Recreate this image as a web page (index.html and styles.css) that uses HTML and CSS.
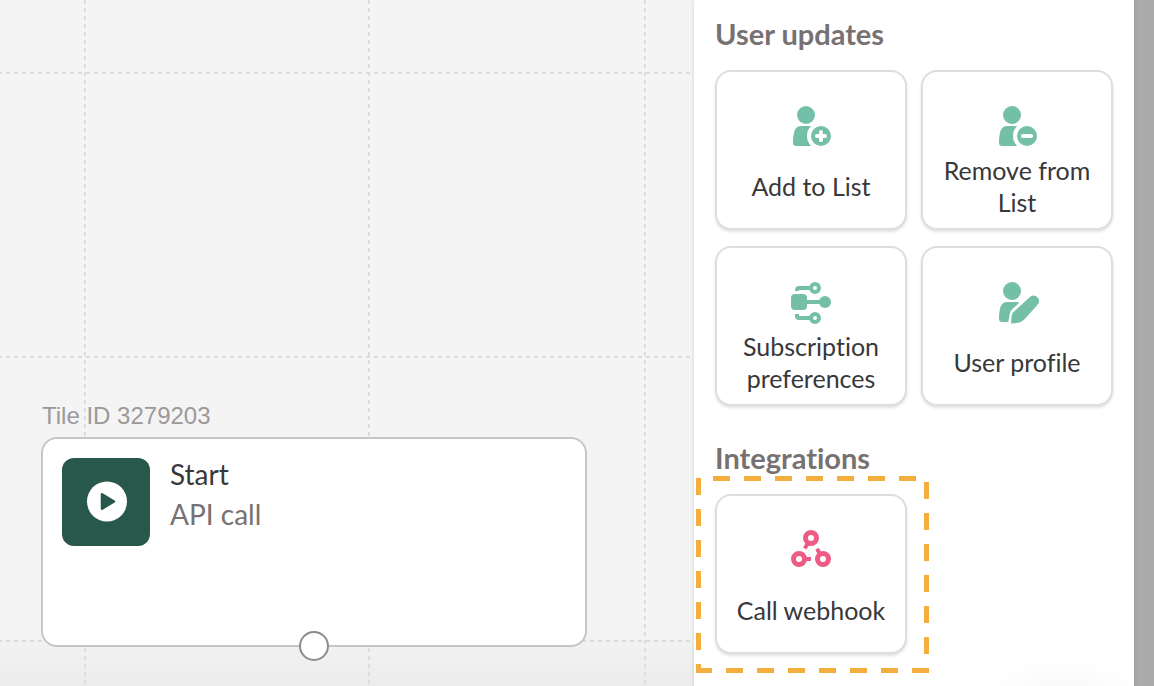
FILE: index.html
```html
<!DOCTYPE html>
<html lang="en">
<head>
    <meta charset="UTF-8">
    <meta name="viewport" content="width=device-width, initial-scale=1.0">
    <title>Journey builder</title>
    <link rel="stylesheet" href="styles.css">
</head>
<body>
    <div class="builder">
        <main class="canvas">
            <svg class="grid-lines" aria-hidden="true">
                <line x1="0" y1="73" x2="100%" y2="73" stroke-dashoffset="2" />
                <line x1="0" y1="357" x2="100%" y2="357" stroke-dashoffset="2" />
                <line x1="0" y1="641" x2="100%" y2="641" stroke-dashoffset="2" />
                <line x1="85" y1="0" x2="85" y2="100%" />
                <line x1="369" y1="0" x2="369" y2="100%" />
                <line x1="645" y1="0" x2="645" y2="100%" />
            </svg>

            <div class="node">
                <div class="node-id">Tile ID 3279203</div>
                <div class="node-box">
                    <div class="node-icon">
                        <svg width="42" height="42" viewBox="0 0 42 42" aria-hidden="true">
                            <circle cx="22" cy="20.500" r="20" fill="#fff" />
                            <path d="M17 13.200v14.600L29 20.500z" fill="#28574b" stroke="#28574b" stroke-width="2.500" stroke-linejoin="round" />
                        </svg>
                    </div>
                    <div class="node-text">
                        <div class="node-title">Start</div>
                        <div class="node-type">API call</div>
                    </div>
                    <button class="node-handle" aria-label="Connect"></button>
                </div>
            </div>
        </main>

        <aside class="panel">
            <section>
                <h2>User updates</h2>
                <div class="tiles">
                    <button class="tile">
                        <svg class="tile-icon" viewBox="0 0 48 48" fill="#74bfa7" aria-hidden="true">
                            <circle cx="19" cy="13" r="9" />
                            <path d="M14 24h13v20H9a3 3 0 0 1-3-3c0-4 .3-7 1-10 .8-4 3-7 7-7z" />
                            <circle cx="34" cy="34" r="14" fill="#fff" />
                            <circle cx="34" cy="34" r="10" />
                            <path d="M34 29.800v8.400M29.800 34h8.400" stroke="#fff" stroke-width="3.800" stroke-linecap="round" />
                        </svg>
                        <span class="tile-label">Add to List</span>
                    </button>
                    <button class="tile">
                        <svg class="tile-icon" viewBox="0 0 48 48" fill="#74bfa7" aria-hidden="true">
                            <circle cx="19" cy="13" r="9" />
                            <path d="M14 24h13v20H9a3 3 0 0 1-3-3c0-4 .3-7 1-10 .8-4 3-7 7-7z" />
                            <circle cx="34" cy="34" r="14" fill="#fff" />
                            <circle cx="34" cy="34" r="10" />
                            <path d="M29.800 34h8.400" stroke="#fff" stroke-width="3.800" stroke-linecap="round" />
                        </svg>
                        <span class="tile-label">Remove from List</span>
                    </button>
                    <button class="tile">
                        <svg class="tile-icon" viewBox="0 0 48 48" fill="none" stroke="#74bfa7" stroke-width="4" aria-hidden="true">
                            <rect x="4" y="16" width="16" height="16" rx="4" fill="#74bfa7" stroke="none" />
                            <path d="M19 24h16" />
                            <circle cx="38" cy="24" r="6" fill="#74bfa7" stroke="none" />
                            <circle cx="28" cy="10" r="4" />
                            <circle cx="28" cy="40" r="4" />
                            <path d="M10 13v-1a2 2 0 0 1 2-2h12" />
                            <path d="M10 36v2a2 2 0 0 0 2 2h12" />
                        </svg>
                        <span class="tile-label">Subscription preferences</span>
                    </button>
                    <button class="tile">
                        <svg class="tile-icon" viewBox="0 0 48 48" fill="#74bfa7" aria-hidden="true">
                            <circle cx="19" cy="13" r="9" />
                            <path d="M14 24h10.500c1.200 0 1.700.8 1 1.500l-6.500 6c-1.200 1.200-2 2.700-2.200 4.500L15.300 44H9a3 3 0 0 1-3-3c0-4 .3-7 1-10 .8-4 3-7 7-7z" />
                            <path d="M18 45.500c.3-4 .4-7 1-9 .3-1 .8-1.700 1.500-2.400L36.600 19.200a5.500 5.500 0 0 1 7.800 7.900L31.500 41.200c-3.500 3.500-8.500 4.300-13.500 4.300z" />
                        </svg>
                        <span class="tile-label">User profile</span>
                    </button>
                </div>
            </section>

            <section>
                <h2>Integrations</h2>
                <div class="tiles">
                    <div class="highlighted">
                        <button class="tile">
                            <svg class="tile-icon" viewBox="0 0 48 48" fill="none" stroke="#ee5c85" aria-hidden="true">
                                <g stroke-width="5">
                                    <circle cx="24" cy="12" r="5.500" />
                                    <circle cx="12" cy="33" r="5.500" />
                                    <circle cx="36" cy="33" r="5.500" />
                                </g>
                                <path d="M21 17l-3.200 5.400M18 33h6M33 28l-3-5.200" stroke-width="4" />
                            </svg>
                            <span class="tile-label">Call webhook</span>
                        </button>
                        <!-- lines sit on the svg edges, so only the inner half of each stroke shows -->
                        <svg class="highlight" aria-hidden="true">
                            <line x1="17" y1="0" x2="100%" y2="0" />
                            <line x1="100%" y1="6" x2="100%" y2="100%" />
                            <line x1="0" y1="100%" x2="100%" y2="100%" stroke-dashoffset="1" />
                            <line x1="0" y1="2" x2="0" y2="100%" />
                        </svg>
                    </div>
                </div>
            </section>
        </aside>

        <div class="scroll-track"></div>
    </div>
</body>
</html>
```
FILE: styles.css
```css
* {
    box-sizing: border-box;
}
body {
    margin: 0;
    font-family: Lato, "Liberation Sans", sans-serif;
    font-variant-ligatures: none;
    color: #38383a;
    background: #f4f4f4;
}
button {
    font: inherit;
    font-variant-ligatures: none;
    color: inherit;
    cursor: pointer;
}
.builder {
    display: flex;
    height: 100vh;
    overflow: hidden;
}

/* canvas */
.canvas {
    position: relative;
    flex: 1;
    background: linear-gradient(to top, #ececec, #f4f4f4 60px);
}
.grid-lines {
    position: absolute;
    width: 100%;
    height: 100%;
}
.grid-lines line {
    stroke: #dddcdd;
    stroke-width: 2;
    stroke-dasharray: 4 4;
}
.node {
    position: absolute;
    left: 41px;
    top: 400px;
    width: 546px;
}
.node-id {
    padding-left: 1px;
    font: 24px/32px "Liberation Sans", sans-serif;
    color: #9b999a;
    margin-bottom: 5px;
}
.node-box {
    position: relative;
    display: flex;
    gap: 20px;
    min-height: 210px;
    padding: 19px;
    background: #fff;
    border: 2px solid #c8c5c6;
    border-radius: 16px;
}
.node-icon {
    display: flex;
    align-items: center;
    justify-content: center;
    width: 88px;
    height: 88px;
    border-radius: 12px;
    background: #28574b;
}
.node-text {
    font-size: 28px;
    line-height: 40px;
    margin-top: -4px;
}
.node-type {
    color: #777172;
}
.node-handle {
    position: absolute;
    left: 50%;
    bottom: -16px;
    width: 30px;
    height: 30px;
    margin-left: -15px;
    padding: 0;
    background: #fff;
    border: 2px solid #8f898b;
    border-radius: 50%;
}

/* side panel */
.panel {
    position: relative;
    display: flex;
    flex-direction: column;
    gap: 35px;
    width: 440px;
    padding: 17px 21px;
    background: radial-gradient(ellipse 80px 26px at 370px 100%, #f9f9f9, #fff);
    box-shadow: 0 0 4px rgba(0, 0, 0, 0.15);
}
.panel h2 {
    margin: 0 0 19px;
    font-size: 29px;
    line-height: 34px;
    font-weight: bold;
    color: #777172;
}
.tiles {
    display: grid;
    grid-template-columns: 1fr 1fr;
    gap: 16px 14px;
}
.tile {
    display: flex;
    flex-direction: column;
    align-items: center;
    gap: 4px;
    width: 100%;
    height: 160px;
    padding: 30px 12px 0;
    background: #fff;
    border: 2px solid #dedede;
    border-radius: 16px;
    box-shadow: 0 2px 3px rgba(0, 0, 0, 0.12);
}
.tile-icon {
    width: 48px;
    height: 48px;
    flex-shrink: 0;
}
.tile-label {
    display: flex;
    align-items: center;
    height: 64px;
    font-size: 25px;
    line-height: 32px;
}
.highlighted {
    position: relative;
}
.highlight {
    position: absolute;
    left: -19px;
    top: -18px;
    width: calc(100% + 41px);
    height: calc(100% + 37px);
    pointer-events: none;
}
.highlight line {
    stroke: #f4ae3d;
    stroke-width: 10;
    stroke-dasharray: 17 14;
}
.scroll-track {
    width: 20px;
    background: #ababab;
}
```
